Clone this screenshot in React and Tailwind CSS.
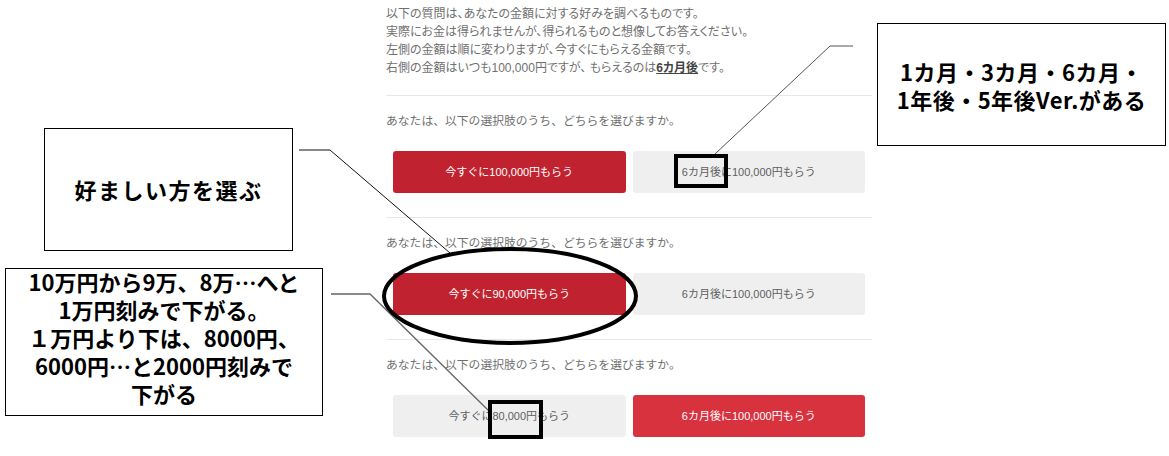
import React from "react";

const uiFont = "[font-family:'Liberation_Sans','Noto_Sans_CJK_JP',sans-serif]";

function ChoiceRow({ left, right, pick }) {
  // pick: "left" | "right"
  return (
    <section className="border-t border-[#e8e8e8] pt-[16px] pb-[24px]">
      <p className="text-[11.8px] leading-[18px] text-[#707070]">
        あなたは、以下の選択肢のうち、どちらを選びますか。
      </p>
      <div className="mt-[21px] grid grid-cols-2 gap-[7px] px-[7px]">
        <button
          className={`h-[42px] rounded-[3px] text-[11px] ${
            pick === "left" ? "bg-[#c0232f] text-white" : "bg-[#efefef] text-[#606060]"
          }`}
        >
          {left}
        </button>
        <button
          className={`h-[42px] rounded-[3px] text-[11px] ${
            pick === "right" ? "bg-[#d9323f] text-white" : "bg-[#efefef] text-[#606060]"
          }`}
        >
          {right}
        </button>
      </div>
    </section>
  );
}

export default function App() {
  return (
    <div className={`relative w-[1169px] h-[456px] overflow-hidden bg-white ${uiFont}`}>
      {/* survey column */}
      <div className="ml-[386px] w-[486px] pt-[5px]">
        <div className="text-[12px] leading-[18px] text-[#707070] [font-feature-settings:'palt']">
          <p>以下の質問は、あなたの金額に対する好みを調べるものです。</p>
          <p>実際にお金は得られませんが、得られるものと想像してお答えください。</p>
          <p>左側の金額は順に変わりますが、今すぐにもらえる金額です。</p>
          <p>
            右側の金額はいつも100,000円ですが、 もらえるのは
            <span className="font-bold underline text-[#444]">6カ月後</span>です。
          </p>
        </div>
        <div className="mt-[18px]">
          <ChoiceRow left="今すぐに100,000円もらう" right="6カ月後に100,000円もらう" pick="left" />
          <ChoiceRow left="今すぐに90,000円もらう" right="6カ月後に100,000円もらう" pick="left" />
          <ChoiceRow left="今すぐに80,000円もらう" right="6カ月後に100,000円もらう" pick="right" />
        </div>
      </div>

      {/* annotation layer */}
      <svg className="absolute left-0 top-0" width="1169" height="456" viewBox="0 0 1169 456">
        <polyline points="853,46 830,46 715,154" fill="none" stroke="#555" strokeWidth="1" />
        <polyline points="299,150 330,150 450,253" fill="none" stroke="#111" strokeWidth="1" />
        <polyline points="331,294 370,294 489,411" fill="none" stroke="#666" strokeWidth="1.3" />
        <ellipse cx="510" cy="296" rx="126" ry="47" fill="none" stroke="#000" strokeWidth="4" />
      </svg>

      <div className="absolute left-[674px] top-[154px] w-[54px] h-[34px] border-[4px] border-black" />
      <div className="absolute left-[488px] top-[400px] w-[55px] h-[39px] border-[4px] border-black" />

      <div className="absolute left-[877px] top-[23px] w-[289px] h-[123px] border-[1.5px] border-black bg-white flex items-center justify-center text-center text-[22px] leading-[28px] tracking-[0.5px] font-bold text-black [font-family:'Noto_Sans_CJK_JP',sans-serif]">
        <p>
          1カ月・3カ月・6カ月・
          <br />
          1年後・5年後Ver.がある
        </p>
      </div>

      <div className="absolute left-[44px] top-[128px] w-[249px] h-[123px] border-[1.5px] border-black bg-white flex items-center justify-center text-[22px] tracking-[1.5px] font-bold text-black [font-family:'Noto_Sans_CJK_JP',sans-serif]">
        <p>好ましい方を選ぶ</p>
      </div>

      <div className="absolute left-[5px] top-[268px] w-[318px] h-[148px] border-[1.5px] border-black bg-white text-center text-[22px] leading-[28px] font-bold text-black [font-family:'Noto_Sans_CJK_JP',sans-serif]">
        <p className="-mt-[2px]">
          10万円から9万、8万…へと
          <br />
          1万円刻みで下がる。
          <br />
          １万円より下は、8000円、
          <br />
          6000円…と2000円刻みで
          <br />
          下がる
        </p>
      </div>
    </div>
  );
}
